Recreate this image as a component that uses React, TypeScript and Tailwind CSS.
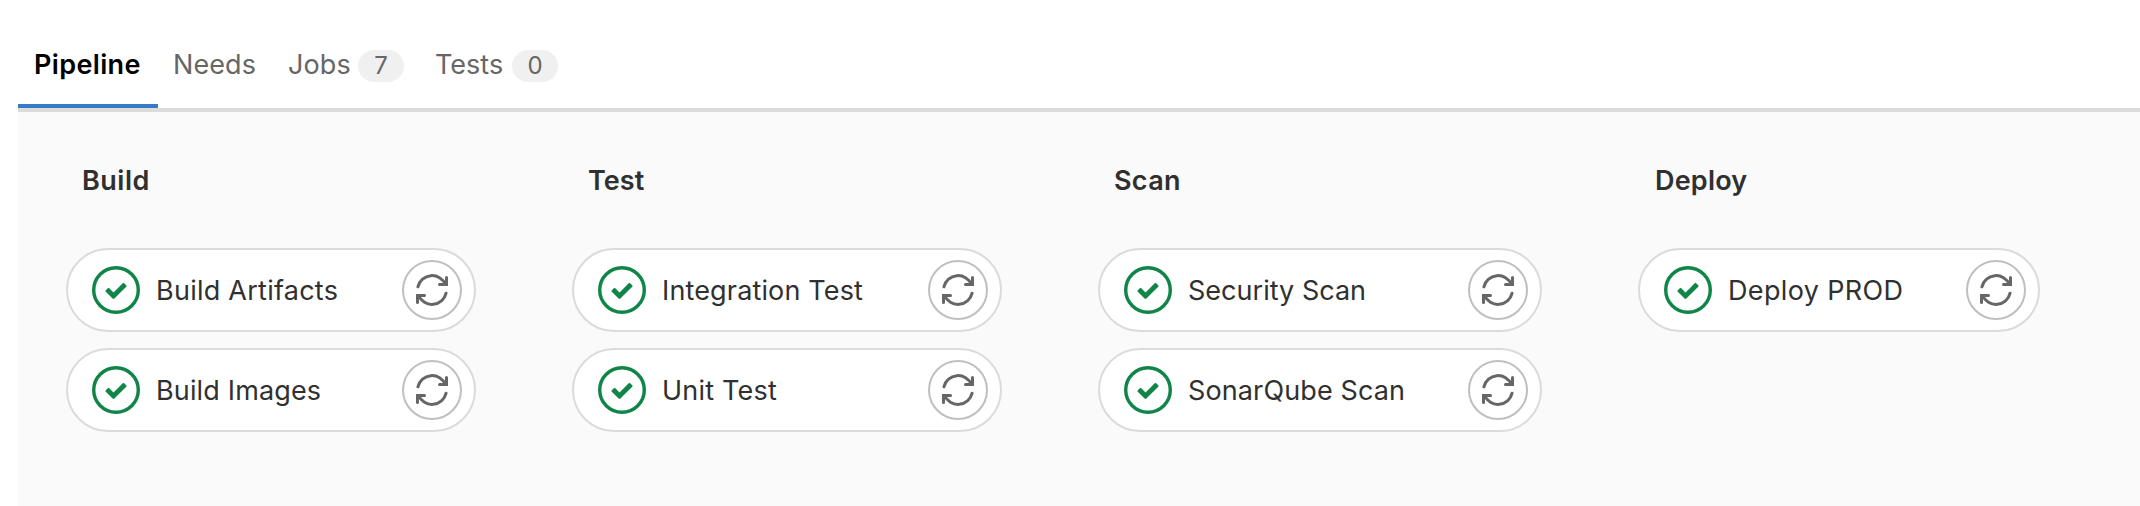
type Label = { text: string; tracking: string };

const tabs = [
  { text: 'Pipeline', box: 'w-[140px] pl-4 font-semibold text-black tracking-[0.36px] border-b-4 border-[#367cc5]', label: '' },
  { text: 'Needs', box: 'w-[114px] pl-[15px] border-b-4 border-transparent tracking-[0.1px]', label: '' },
  { text: 'Jobs', count: 7, box: 'w-[148px] pl-4 border-b-4 border-transparent', label: 'w-[70px] tracking-[0.12px]' },
  { text: 'Tests', count: 0, box: 'w-[154px] pl-[15px] border-b-4 border-transparent', label: 'w-[77px]' },
];

const stages: { title: Label; width: string; jobs: Label[] }[] = [
  {
    title: { text: 'Build', tracking: 'pl-4 tracking-[0.5px]' },
    width: 'w-[410px]',
    jobs: [
      { text: 'Build Artifacts', tracking: 'tracking-[0.25px]' },
      { text: 'Build Images', tracking: 'tracking-[0.15px]' },
    ],
  },
  {
    title: { text: 'Test', tracking: 'pl-4 tracking-[0.05px]' },
    width: 'w-[430px]',
    jobs: [
      { text: 'Integration Test', tracking: 'tracking-[0.15px]' },
      { text: 'Unit Test', tracking: 'tracking-[0.21px]' },
    ],
  },
  {
    title: { text: 'Scan', tracking: 'pl-4 tracking-[0.31px]' },
    width: 'w-[444px]',
    jobs: [
      { text: 'Security Scan', tracking: 'tracking-[0.02px]' },
      { text: 'SonarQube Scan', tracking: 'tracking-[0.12px]' },
    ],
  },
  {
    title: { text: 'Deploy', tracking: 'pl-[17px] tracking-[0.2px]' },
    width: 'w-[402px]',
    jobs: [{ text: 'Deploy PROD', tracking: 'tracking-[0.35px]' }],
  },
];

function SuccessIcon() {
  return (
    <svg viewBox="0 0 14 14" className="size-12 shrink-0 text-[#108548]">
      <circle cx="7" cy="7" r="6.5" fill="none" stroke="currentColor" />
      <path
        fill="currentColor"
        d="M6.278 7.697L5.045 6.464a.296.296 0 0 0-.42-.002l-.613.614a.298.298 0 0 0 .002.42l1.91 1.909a.5.5 0 0 0 .703.005l.265-.265L9.997 6.04a.291.291 0 0 0-.009-.408l-.614-.614a.29.29 0 0 0-.408-.009L6.278 7.697z"
      />
    </svg>
  );
}

function RetryIcon() {
  return (
    <svg viewBox="0 0 16 16" className="size-8" fill="none" stroke="currentColor" strokeWidth="1.5" strokeLinecap="round">
      <path d="M.95 6.4A7.25 7.25 0 0 1 14.7 5.25" />
      <path d="M15.25 1.75v3.5h-3.5" />
      <path d="M15.05 9.6A7.25 7.25 0 0 1 1.3 10.75" />
      <path d="M.75 14.25v-3.5h3.5" />
    </svg>
  );
}

function Job({ text, tracking }: Label) {
  return (
    <li className="flex h-[84px] items-center rounded-full border-2 border-[#dbdbdb] bg-white pr-3 pl-6">
      <SuccessIcon />
      <span className={`ml-4 flex-1 pt-0.5 whitespace-nowrap ${tracking}`}>{text}</span>
      <button
        aria-label="Retry"
        className="flex size-[60px] items-center justify-center rounded-full border-2 border-[#bfbfbf] bg-white text-[#666666]"
      >
        <RetryIcon />
      </button>
    </li>
  );
}

export default function App() {
  return (
    <div className="flex h-[506px] flex-col overflow-hidden bg-white pl-[18px] font-['Inter',sans-serif] text-[27px] leading-[34px] text-[#303030]">
      <nav className="flex h-28 shrink-0 border-b-4 border-[#dbdbdb] pt-6 text-[#666666]">
        {tabs.map((tab) => (
          <a key={tab.text} className={`flex h-[84px] items-start pt-6 ${tab.box}`}>
            <span className={tab.label}>{tab.text}</span>
            {tab.count !== undefined && (
              <span className="mt-0.5 h-8 w-[46px] rounded-full bg-[#f0f0f0] text-center text-2xl leading-[31px]">
                {tab.count}
              </span>
            )}
          </a>
        ))}
      </nav>
      <main className="flex flex-1 gap-24 bg-[#fafafa] pt-[52px] pl-12">
        {stages.map((stage) => (
          <section key={stage.title.text} className={`shrink-0 ${stage.width}`}>
            <h2 className={`font-semibold ${stage.title.tracking}`}>{stage.title.text}</h2>
            <ul className="mt-[50px] flex flex-col gap-4">
              {stage.jobs.map((job) => (
                <Job key={job.text} {...job} />
              ))}
            </ul>
          </section>
        ))}
      </main>
    </div>
  );
}
